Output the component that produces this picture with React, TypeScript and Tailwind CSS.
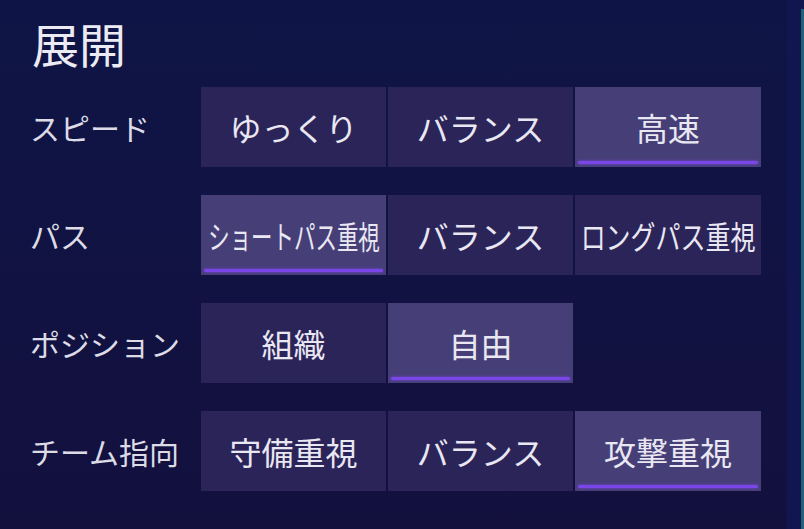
import React from "react";

type Opt = { text: string; squeeze?: string };

const ROWS: { label: string; options: Opt[]; selected: number }[] = [
  {
    label: "スピード",
    options: [{ text: "ゆっくり" }, { text: "バランス" }, { text: "高速" }],
    selected: 2,
  },
  {
    label: "パス",
    options: [
      { text: "ショートパス重視", squeeze: "scale-x-[0.67]" },
      { text: "バランス" },
      { text: "ロングパス重視", squeeze: "scale-x-[0.78]" },
    ],
    selected: 0,
  },
  {
    label: "ポジション",
    options: [{ text: "組織" }, { text: "自由" }],
    selected: 1,
  },
  {
    label: "チーム指向",
    options: [{ text: "守備重視" }, { text: "バランス" }, { text: "攻撃重視" }],
    selected: 2,
  },
];

function OptionButton({ opt, active }: { opt: Opt; active: boolean }) {
  return (
    <div
      className={
        "relative h-[80px] flex items-center justify-center overflow-visible " +
        (active ? "bg-[#463f77]" : "bg-[#2b2459]")
      }
    >
      <span
        className={
          "inline-block whitespace-nowrap text-[32px] leading-none text-[#e9e7f2] " +
          (opt.squeeze ?? "")
        }
      >
        {opt.text}
      </span>
      {active && (
        <div className="absolute left-[3px] right-[3px] bottom-[3px] h-[3px] rounded-full bg-[#7b46e8] shadow-[0_0_3px_#7b46e8]" />
      )}
    </div>
  );
}

export default function App() {
  return (
    <div
      className="flex h-[529px] w-[804px] overflow-hidden bg-gradient-to-b from-[#0e1546] to-[#13103e]"
      style={{ fontFamily: '"Noto Sans CJK JP", "Noto Sans", sans-serif' }}
    >
      <div className="flex-1 pl-[30px] pt-[19px]">
        <h1 className="pl-[2px] text-[47px] leading-none text-[#ecebf3] font-normal mb-[21px]">展開</h1>

        <div className="flex flex-col gap-[28px]">
          {ROWS.map((row) => (
            <div key={row.label} className="flex items-center">
              <div className="w-[171px] text-[30px] leading-none text-[#dcdbe6] whitespace-nowrap">
                {row.label}
              </div>
              <div className="grid grid-cols-[185px_185px_186px] gap-x-[2px]">
                {row.options.map((opt, i) => (
                  <OptionButton key={i} opt={opt} active={i === row.selected} />
                ))}
              </div>
            </div>
          ))}
        </div>
      </div>

      {/* side rail */}
      <div className="w-[14px] bg-[#111550]" />
      <div className="w-[3px] bg-[#111550] pt-[9px] flex">
        <div className="flex-1 bg-[#1d6478]" />
      </div>
    </div>
  );
}
